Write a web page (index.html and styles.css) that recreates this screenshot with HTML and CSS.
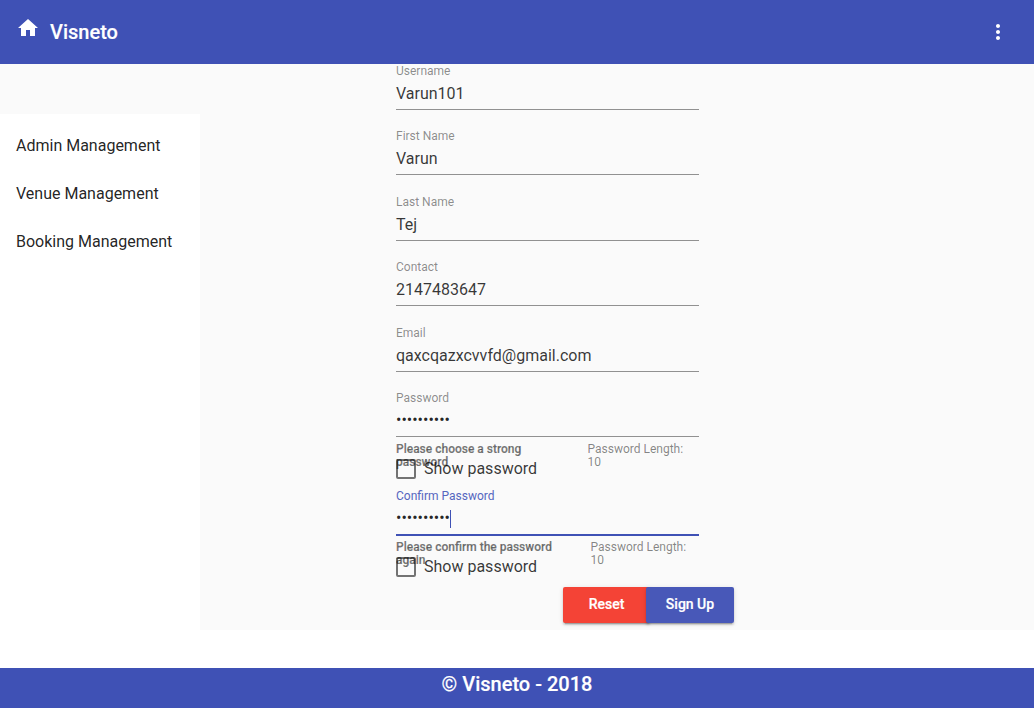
FILE: index.html
```html
<!DOCTYPE html>
<html lang="en">
<head>
<meta charset="utf-8">
<title>Visneto</title>
<link rel="stylesheet" href="styles.css">
</head>
<body>
<header class="toolbar">
  <svg class="home" viewBox="0 0 24 24"><path d="M10 20v-6h4v6h5v-8h3L12 3 2 12h3v8z"/></svg>
  <h1 class="brand">Visneto</h1>
  <svg class="more" viewBox="0 0 24 24"><path d="M12 8c1.100 0 2-.9 2-2s-.9-2-2-2-2 .9-2 2 .9 2 2 2zm0 2c-1.100 0-2 .9-2 2s.9 2 2 2 2-.9 2-2-.9-2-2-2zm0 6c-1.100 0-2 .9-2 2s.9 2 2 2 2-.9 2-2-.9-2-2-2z"/></svg>
</header>
<div class="content">
  <nav class="sidenav">
    <a class="nav-item">Admin Management</a>
    <a class="nav-item">Venue Management</a>
    <a class="nav-item">Booking Management</a>
  </nav>
  <main class="form">
    <div class="field"><label class="label">Username</label><div class="value">Varun101</div></div>
    <div class="field"><label class="label">First Name</label><div class="value">Varun</div></div>
    <div class="field"><label class="label">Last Name</label><div class="value">Tej</div></div>
    <div class="field"><label class="label">Contact</label><div class="value">2147483647</div></div>
    <div class="field"><label class="label">Email</label><div class="value">qaxcqazxcvvfd@gmail.com</div></div>
    <div class="field password"><label class="label">Password</label><div class="value dots">••••••••••</div>
      <div class="hints"><strong class="hint">Please choose a strong password</strong><span class="count">Password Length: 10</span></div></div>
    <div class="check"><span class="box"></span><span>Show password</span></div>
    <div class="field password focused"><label class="label">Confirm Password</label><div class="value dots">••••••••••<span class="caret"></span></div>
      <div class="hints"><strong class="hint">Please confirm the password again</strong><span class="count">Password Length: 10</span></div></div>
    <div class="check"><span class="box"></span><span>Show password</span></div>
    <div class="actions"><button class="btn reset">Reset</button><button class="btn signup">Sign Up</button></div>
  </main>
</div>
<footer class="footer">© Visneto - 2018</footer>
</body>
</html>
```
FILE: styles.css
```css
* { box-sizing: border-box; }
body { margin: 0; height: 708px; overflow: hidden; background: #fff; font-family: Roboto, sans-serif; font-size: 16px; color: rgba(0,0,0,.87); }
.toolbar { height: 64px; padding: 0 24px 0 16px; display: flex; align-items: center; background: #3f51b5; color: #fff; }
.home { width: 24px; height: 24px; margin: 0 10px 8px 0; fill: #fff; }
.brand { margin: 0; font-size: 20px; font-weight: 500; -webkit-text-stroke: .15px; }
.more { width: 24px; height: 24px; margin-left: auto; fill: #fff; }
.content { height: 566px; display: flex; background: #fafafa; }
.sidenav { width: 200px; margin-top: 50px; padding-top: 7px; background: #fff; }
.nav-item { display: flex; height: 48px; padding: 0 16px; align-items: center; }
.form { width: 338px; margin-left: 196px; color: rgba(0,0,0,.79); }
.field { width: 303px; height: 65.4px; line-height: 18px; }
.label { display: block; height: 14px; font-size: 12px; line-height: 14px; color: rgba(0,0,0,.46); }
.value { height: 32px; padding-top: 7px; border-bottom: 1px solid rgba(0,0,0,.42); }
.value.dots { padding-top: 6px; color: rgba(0,0,0,.87); }
.password { height: 68px; }
.hints { display: flex; padding-top: 6px; font-size: 12px; line-height: 13px; color: rgba(0,0,0,.48); }
.hint { width: 170px; margin-right: 21.5px; font-weight: 500; color: rgba(0,0,0,.54); -webkit-text-stroke: .2px; }
.count { width: 111px; }
.check { display: flex; align-items: center; gap: 8px; height: 20px; }
.box { width: 20px; height: 20px; border: 2px solid rgba(0,0,0,.54); border-radius: 2px; }
.focused { margin-top: 10px; }
.focused .label { color: #5666bf; }
.focused .value { height: 33px; border-bottom: 2px solid #3f51b5; }
.focused .hints { padding-top: 5px; }
.focused .hint { margin-right: 24.5px; }
.focused .count { width: 108px; }
.caret { display: inline-block; width: 1px; height: 18px; background: #3f51b5; vertical-align: middle; }
.actions { display: flex; justify-content: flex-end; margin-top: 10px; }
.btn { height: 36px; padding: 0 0 2px; border: 0; border-radius: 2px; color: #fff; font: 500 14px/34px Roboto, sans-serif; -webkit-text-stroke: .2px; box-shadow: 0 3px 1px -2px rgba(0,0,0,.2), 0 2px 2px rgba(0,0,0,.14), 0 1px 5px rgba(0,0,0,.12); }
.reset { width: 87px; background: #f44336; }
.signup { width: 88px; margin-left: -4px; background: #4858b8; }
.footer { height: 40px; margin-top: 38px; background: #3f51b5; color: #fff; text-align: center; font-size: 20px; font-weight: 500; line-height: 32px; -webkit-text-stroke: .15px; }
```
